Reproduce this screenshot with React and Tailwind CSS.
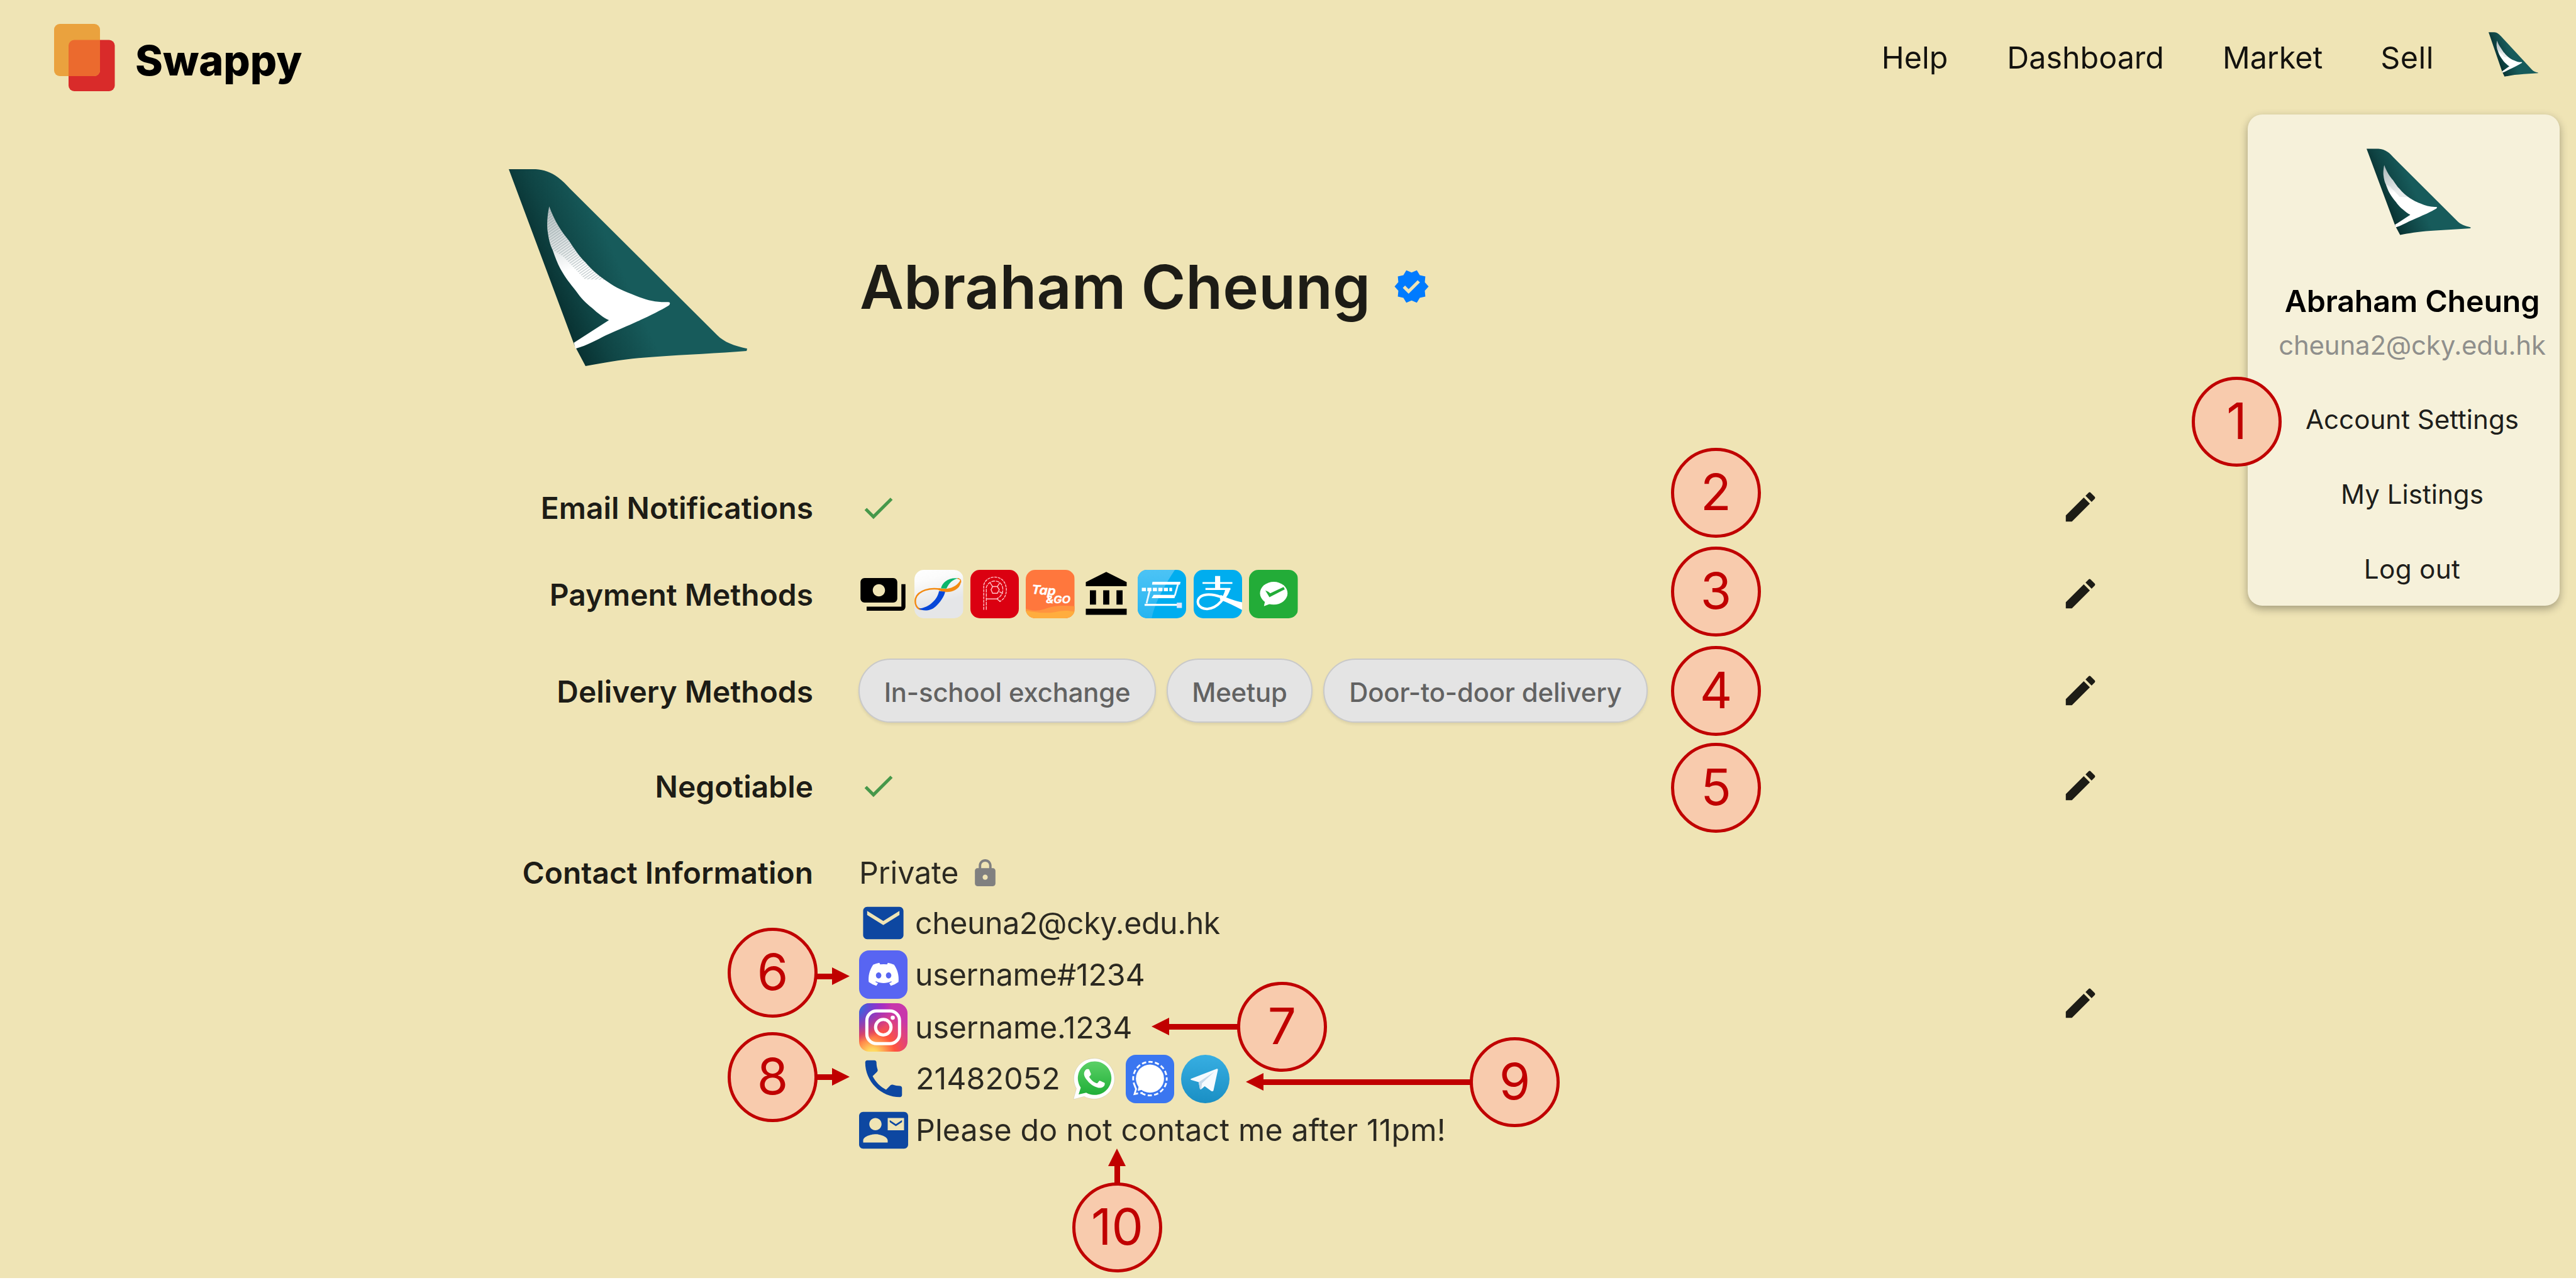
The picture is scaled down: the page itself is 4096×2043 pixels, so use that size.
import React from "react";
import { MdVerified, MdEdit, MdCheck, MdLock, MdEmail, MdPhone, MdContactMail } from "react-icons/md";
import { FaDiscord } from "react-icons/fa";

function TailFin({ id, className }) {
  return (
    <svg viewBox="0 0 408 340" preserveAspectRatio="none" className={className}>
      <defs>
        <linearGradient id={`${id}-body`} gradientUnits="userSpaceOnUse" x1="72" y1="260" x2="205" y2="200">
          <stop offset="0" stopColor="#062a2a" />
          <stop offset="0.45" stopColor="#0f4444" />
          <stop offset="1" stopColor="#175b5b" />
        </linearGradient>
        <linearGradient id={`${id}-feather`} gradientUnits="userSpaceOnUse" x1="70" y1="65" x2="120" y2="200">
          <stop offset="0" stopColor="#b4c0c1" />
          <stop offset="0.45" stopColor="#dde2e3" />
          <stop offset="0.8" stopColor="#ffffff" />
        </linearGradient>
        <pattern id={`${id}-hatch`} width="6" height="4" patternUnits="userSpaceOnUse" patternTransform="rotate(-35)">
          <rect width="6" height="1.4" fill="#7f9295" />
        </pattern>
      </defs>
      <path
        d="M0 1 L46 1 C60 2 72 6 84 15 C92 21 98 27 104 34 L356 286 C368 298 384 304 407 309 L406 313 C360 317 300 319 250 323 C200 326 165 333 131 339 L112 303 Z"
        fill={`url(#${id}-body)`}
      />
      <path
        d="M69 65 C66 80 65 92 66 105 C68 120 70 130 75 140 C79 152 83 162 88 172 C97 188 105 198 114 209 C123 222 132 231 142 239 C152 248 160 255 171 260 L111 299 L114 309 C135 303 150 294 166 286 C186 277 203 270 220 262 C240 253 260 243 273 235 C276 232 276 229 272 229 C250 230 232 225 209 215 C190 208 178 201 164 191 C150 181 140 172 131 161 C120 150 112 138 103 124 C90 108 79 92 69 65 Z"
        fill={`url(#${id}-feather)`}
      />
      <path
        d="M69 65 C66 80 65 92 66 105 C68 120 70 130 75 140 L92 150 L130 190 L164 191 C150 181 140 172 131 161 C120 150 112 138 103 124 C90 108 79 92 69 65 Z"
        fill={`url(#${id}-hatch)`}
        opacity="0.5"
      />
    </svg>
  );
}

function CashIcon() {
  return (
    <svg viewBox="0 0 24 24" className="size-[78px]" fill="#000">
      <path d="M19 14V6c0-1.1-.9-2-2-2H3c-1.1 0-2 .9-2 2v8c0 1.1.9 2 2 2h14c1.1 0 2-.9 2-2zm-9-1c-1.66 0-3-1.34-3-3s1.34-3 3-3 3 1.34 3 3-1.34 3-3 3zm13-6v11c0 1.1-.9 2-2 2H4v-2h17V7h2z" />
    </svg>
  );
}

function BankIcon() {
  return (
    <svg viewBox="0 0 24 24" className="size-[78px]" fill="#000">
      <path d="M4 10h3v7H4zM10.5 10h3v7h-3zM2 19h20v3H2zM17 10h3v7h-3zM12 1 2 6v2h20V6z" />
    </svg>
  );
}

function OctopusIcon() {
  return (
    <svg viewBox="27 39 248 248" className="size-[77.5px] rounded-[15px]">
      <defs>
        <linearGradient id="oct-bg" x1="0" y1="0" x2="0.25" y2="1">
          <stop offset="0" stopColor="#ffffff" />
          <stop offset="0.25" stopColor="#fbfbfb" />
          <stop offset="0.75" stopColor="#e5e6e8" />
        </linearGradient>
      </defs>
      <rect x="27" y="39" width="248" height="248" fill="url(#oct-bg)" />
      <path d="M160 138 C110 128 45 142 33 185 C27 212 38 238 62 240" fill="none" stroke="#f38b12" strokeWidth="8" />
      <path d="M246 83 C262 84 264 94 262 104" fill="none" stroke="#f38b12" strokeWidth="5" />
      <path d="M150 132 C200 142 238 128 261 92 C270 118 240 151 192 152 C172 152 160 147 150 141 Z" fill="#f38b12" />
      <path d="M162 133 C170 100 202 76 250 82 C222 88 204 104 190 134 Z" fill="#0bb56c" />
      <path d="M152 147 C145 190 100 233 48 236 C70 250 108 250 135 225 C160 202 180 172 183 150 Z" fill="#0747d8" />
    </svg>
  );
}

function PayMeIcon() {
  return (
    <svg viewBox="305 39 248 248" className="size-[77.5px] rounded-[15px]">
      <rect x="305" y="39" width="248" height="248" fill="#db0011" />
      <g fill="none" stroke="#ffc4c8" strokeWidth="4.5">
        <path d="M373 242 V116 C380 88 405 76 430 76 C462 76 486 100 488 138 C488 170 475 192 452 200" strokeDasharray="14 4" />
        <path d="M386 242 V128 C392 108 410 96 430 96 C454 96 470 114 470 140 C470 162 458 176 440 186" strokeDasharray="18 4" />
        <path d="M418 124 H442 L452 140 L442 158 H418 L410 140 Z" />
        <path d="M405 104 L418 124 M455 104 L442 124 M470 160 L452 150" />
        <path d="M388 187 H440 L458 201" />
      </g>
    </svg>
  );
}

function TapGoIcon() {
  return (
    <svg viewBox="593 39 248 248" className="size-[77.5px] rounded-[15px]">
      <rect x="593" y="39" width="248" height="248" fill="#ff773d" />
      <path d="M593 236 C620 248 650 250 690 238 C730 224 760 218 841 224 V287 H593 Z" fill="#ff943f" />
      <path d="M593 246 C640 256 700 262 740 254 C780 246 800 244 841 252 V287 H593 Z" fill="#ffad3e" />
      <g fill="#fff" stroke="#fff" strokeWidth="2" fontFamily="Inter, sans-serif" fontWeight="600" fontStyle="italic">
        <text x="622" y="160" fontSize="62" textLength="122" lengthAdjust="spacingAndGlyphs" transform="rotate(4 622 160)">Tap</text>
        <text x="696" y="207" fontSize="50" textLength="124" lengthAdjust="spacingAndGlyphs">&amp;GO</text>
      </g>
    </svg>
  );
}

function FpsIcon() {
  return (
    <svg viewBox="47 39 248 248" className="size-[77.5px] rounded-[15px]">
      <defs>
        <linearGradient id="fps-shine" x1="0" y1="0" x2="0" y2="1">
          <stop offset="0" stopColor="#4cc3f5" />
          <stop offset="1" stopColor="#26b5f1" />
        </linearGradient>
      </defs>
      <rect x="47" y="39" width="248" height="248" fill="#00adef" />
      <path d="M47 39 H236 C190 110 135 200 118 287 H47 Z" fill="url(#fps-shine)" />
      <path d="M122 100 H265 L262 114 H120 Z" fill="#fff" />
      <path d="M128 166 H240 L234 183 H118 Z" fill="#fff" />
      <path d="M252 112 L236 170 M108 144 L92 210" stroke="#e8f6ff" strokeWidth="9" />
      <path d="M68 139 H222" stroke="#fff" strokeWidth="17" strokeDasharray="21 7" />
      <path d="M82 217 H262" stroke="#fff" strokeWidth="11" />
      <rect x="246" y="206" width="26" height="27" fill="#dfe6fb" />
    </svg>
  );
}

function AlipayIcon() {
  return (
    <svg viewBox="325 39 248 248" className="size-[77.5px] rounded-[15px]">
      <rect x="325" y="39" width="248" height="248" fill="#00adef" />
      <path d="M434 70 H460 V134 H434 Z M370 101 H522 V110 H370 Z M385 131 H512 V141 H385 Z" fill="#fff" />
      <path d="M500 136 C486 178 450 236 393 238 C345 236 332 196 362 174 C392 156 440 166 480 184" fill="none" stroke="#fff" strokeWidth="13" />
      <path d="M486 134 H512 C505 156 497 170 488 182 L470 178 C478 164 484 150 486 134 Z" fill="#fff" />
      <path d="M462 166 C500 184 540 198 573 204 V244 C535 224 500 206 458 190 Z" fill="#fff" />
    </svg>
  );
}

function WeChatPayIcon() {
  return (
    <svg viewBox="614 39 248 248" className="size-[77.5px] rounded-[15px]">
      <rect x="614" y="39" width="248" height="248" fill="#23ac38" />
      <ellipse cx="740" cy="158" rx="70" ry="58" fill="#fff" />
      <path d="M696 196 L690 224 L726 210 Z" fill="#fff" />
      <path d="M697 144 L712 150 L722 158 L790 126 L796 138 L718 178 Z" fill="#23ac38" />
    </svg>
  );
}

function DiscordIcon() {
  return (
    <div className="flex size-[77px] items-center justify-center rounded-[16px] bg-[#5865f2]">
      <FaDiscord className="size-[52px] text-white" />
    </div>
  );
}

function InstagramIcon() {
  return (
    <svg viewBox="0 0 100 100" className="size-[77px] rounded-[16px]">
      <defs>
        <radialGradient id="ig-warm" cx="0.27" cy="1.07" r="0.99">
          <stop offset="0" stopColor="#ffdd6e" />
          <stop offset="0.12" stopColor="#ffd75e" />
          <stop offset="0.48" stopColor="#ff543e" />
          <stop offset="0.98" stopColor="#c837ab" />
        </radialGradient>
        <radialGradient id="ig-cool" gradientUnits="userSpaceOnUse" cx="-10" cy="4" r="78">
          <stop offset="0" stopColor="#3771c8" />
          <stop offset="0.2" stopColor="#3c68d8" />
          <stop offset="1" stopColor="#6600ff" stopOpacity="0" />
        </radialGradient>
      </defs>
      <rect width="100" height="100" fill="url(#ig-warm)" />
      <rect width="100" height="100" fill="url(#ig-cool)" />
      <rect x="16" y="16" width="67.5" height="67.5" rx="20" fill="none" stroke="#fff" strokeWidth="6.5" />
      <circle cx="50" cy="49.5" r="16" fill="none" stroke="#fff" strokeWidth="6.5" />
      <circle cx="69.5" cy="30" r="4.3" fill="#fff" />
    </svg>
  );
}

function WhatsAppIcon() {
  return (
    <svg viewBox="29 35 248 248" className="size-[77px]">
      <defs>
        <linearGradient id="wa-green" x1="0" y1="0" x2="0" y2="1">
          <stop offset="0" stopColor="#5bd066" />
          <stop offset="1" stopColor="#1faf38" />
        </linearGradient>
      </defs>
      <path d="M45 263 L60 208 A104 104 0 1 1 100 248 Z" fill="#fff" stroke="#00000018" strokeWidth="3" />
      <path d="M71 238 L82 203 A86 86 0 1 1 110 229 Z" fill="url(#wa-green)" />
      <path
        transform="translate(46 53) scale(8.8 8.6)"
        fill="#fff"
        d="M17.472 14.382c-.297-.149-1.758-.867-2.03-.967-.273-.099-.471-.148-.67.15-.197.297-.767.966-.94 1.164-.173.199-.347.223-.644.075-.297-.15-1.255-.463-2.39-1.475-.883-.788-1.48-1.761-1.653-2.059-.173-.297-.018-.458.13-.606.134-.133.298-.347.446-.52.149-.174.198-.298.298-.497.099-.198.05-.371-.025-.52-.075-.149-.669-1.612-.916-2.207-.242-.579-.487-.5-.669-.51-.173-.008-.371-.01-.57-.01-.198 0-.52.074-.792.372-.272.297-1.04 1.016-1.04 2.479 0 1.462 1.065 2.875 1.213 3.074.149.198 2.096 3.2 5.077 4.487.709.306 1.262.489 1.694.625.712.227 1.36.195 1.871.118.571-.085 1.758-.719 2.006-1.413.248-.694.248-1.289.173-1.413-.074-.124-.272-.198-.57-.347z"
      />
    </svg>
  );
}

function SignalIcon() {
  return (
    <svg viewBox="315 35 248 248" className="size-[77px] rounded-[16px]">
      <rect x="315" y="35" width="248" height="248" fill="#3a76f0" />
      <circle cx="439" cy="157" r="86" fill="none" stroke="#fff" strokeWidth="9" strokeDasharray="22 11.8" strokeDashoffset="11" />
      <path d="M346 250 V208 L374 196 L402 222 L390 250 Z" fill="#3a76f0" />
      <circle cx="439" cy="157" r="72" fill="#fff" />
      <path d="M376 220 L384 184 L414 210 Z" fill="#fff" />
      <path d="M362 196 L368 210 L360 236 L378 233 M390 232 L402 229" fill="none" stroke="#fff" strokeWidth="9" />
    </svg>
  );
}

function TelegramIcon() {
  return (
    <svg viewBox="593 34 248 248" className="size-[77px]">
      <defs>
        <linearGradient id="tg-blue" x1="0" y1="0" x2="0" y2="1">
          <stop offset="0" stopColor="#37aee2" />
          <stop offset="1" stopColor="#1a8fc4" />
        </linearGradient>
      </defs>
      <circle cx="717" cy="158" r="124" fill="url(#tg-blue)" />
      <path d="M644 156 L776 106 C781 104 782 108 781 114 L759 216 C757 222 752 222 747 219 L714 195 L696 210 C692 213 690 211 689 206 L683 174 L645 163 C641 161 641 158 644 156 Z" fill="#f6fafe" />
      <path d="M683 174 L762 122 L700 180 L696 210 C692 213 690 211 689 206 Z" fill="#c5d9ea" />
    </svg>
  );
}

function Row({ label, height, children }) {
  return (
    <div className={`grid grid-cols-[484px_1fr_62px] items-center ${height}`}>
      <div className="pt-[2px] text-right text-[47.9px] leading-[60px] font-semibold">{label}</div>
      <div className="flex items-center pl-[72px]">{children}</div>
      <MdEdit className="mb-[2px] size-[62px]" />
    </div>
  );
}

function Chip({ width, children }) {
  return (
    <div
      className={`flex h-[102px] items-center justify-center rounded-full border-2 border-[#c9c9c9] bg-[#e4e4e4] pt-[7px] text-[41.8px] font-medium tracking-[-0.15px] text-[#626262] shadow-[0_3px_4px_rgba(0,0,0,0.08)] ${width}`}
    >
      {children}
    </div>
  );
}

const badges = [
  ["1", "left-[3485px] top-[599px]"],
  ["2", "left-[2657px] top-[712px]"],
  ["3", "left-[2657px] top-[869px]"],
  ["4", "left-[2657px] top-[1027px]"],
  ["5", "left-[2657px] top-[1181px]"],
  ["6", "left-[1157px] top-[1475px]"],
  ["7", "left-[1967px] top-[1561px]"],
  ["8", "left-[1157px] top-[1641px]"],
  ["9", "left-[2337px] top-[1649px]"],
  ["10", "left-[1705px] top-[1880px]"],
];

function Arrow({ className, flip }) {
  return (
    <div className={`absolute flex items-center ${flip ? "flex-row-reverse" : ""} ${className}`}>
      <div className="h-[9px] grow bg-[#c00000]" />
      <svg viewBox="0 0 28 28" className={`size-[28px] shrink-0 ${flip ? "rotate-180" : ""}`}>
        <path d="M0 0 L28 14 L0 28 Z" fill="#c00000" />
      </svg>
    </div>
  );
}

function Annotations() {
  return (
    <>
      <Arrow className="left-[1298px] top-[1538px] w-[53px]" />
      <Arrow className="left-[1298px] top-[1698px] w-[53px]" />
      <Arrow flip className="left-[1831px] top-[1618px] w-[140px]" />
      <Arrow flip className="left-[1981px] top-[1706px] w-[360px]" />
      <div className="absolute left-[1762px] top-[1826px] flex h-[57px] w-[28px] flex-col items-center">
        <svg viewBox="0 0 28 28" className="size-[28px] shrink-0">
          <path d="M14 0 L28 28 L0 28 Z" fill="#c00000" />
        </svg>
        <div className="w-[9px] grow bg-[#c00000]" />
      </div>
      {badges.map(([n, place]) => (
        <div
          key={n}
          className={`absolute flex size-[143px] items-center justify-center rounded-full border-[5px] border-[#c00000] bg-[#f8cbad] pb-[4px] text-[80px] leading-none text-[#c00000] ${place}`}
        >
          {n}
        </div>
      ))}
    </>
  );
}

function AccountMenu() {
  return (
    <div className="absolute left-[3574px] top-[182px] flex h-[781px] w-[496px] flex-col items-center rounded-[23px] bg-[#f6f1da] pl-[27px] pt-[54px] whitespace-nowrap text-black/90 shadow-[0_5px_14px_rgba(0,0,0,0.32)]">
      <TailFin id="menu" className="ml-[21px] h-[138px] w-[166px] shrink-0" />
      <div className="mt-[70px] text-[48.3px] leading-[70px] font-semibold tracking-[-0.15px] text-black">Abraham Cheung</div>
      <div className="text-[41.9px] leading-[70px] tracking-[-0.17px] text-[#8f8f8c]">cheuna2@cky.edu.hk</div>
      <div className="mt-[23px] text-[42.1px] leading-[119px]">Account Settings</div>
      <div className="text-[42.1px] leading-[119px]">My Listings</div>
      <div className="text-[42.3px] leading-[119px] tracking-[0.3px]">Log out</div>
    </div>
  );
}

export default function App() {
  return (
    <div className="h-[2043px] w-[4096px] overflow-hidden bg-white font-['Inter',sans-serif] text-black/88">
      <div className="relative h-[2032px] w-full bg-[#efe4b5]">
        <header className="flex h-[182px] items-center pl-[86px]">
          <svg viewBox="0 0 97 107" className="h-[107px] w-[97px]">
            <rect x="23" y="25.5" width="73.5" height="81.5" rx="9" fill="#d92b2a" />
            <rect x="0" y="0" width="73" height="83" rx="9" fill="#eaa23e" />
            <path d="M32 25.5 H73 V74 A9 9 0 0 1 64 83 H23 V34.5 A9 9 0 0 1 32 25.5 Z" fill="#eb6a2e" />
          </svg>
          <div className="ml-[32px] pt-[9px] text-[66.6px] leading-[80px] font-extrabold text-black">Swappy</div>
          <nav className="ml-auto flex items-center pt-[1px] text-[48.4px] leading-[60px] text-black/92">
            <span className="mr-[94px]">Help</span>
            <span className="mr-[93px]">Dashboard</span>
            <span className="mr-[92px]">Market</span>
            <span className="mr-[87px] tracking-[0.5px]">Sell</span>
            <TailFin id="nav" className="mr-[60px] mb-[11px] h-[71px] w-[79px]" />
          </nav>
        </header>

        <main className="ml-[809px] w-[2530px]">
          <section className="flex h-[556px] items-start pt-[86px]">
            <div className="w-[558px]">
              <TailFin id="profile" className="h-[315px] w-[380px]" />
            </div>
            <div className="flex h-[375px] items-center gap-[36px]">
              <h1 className="text-[96.2px] leading-[120px] font-semibold">Abraham Cheung</h1>
              <MdVerified className="size-[59px] text-[#007bff]" />
            </div>
          </section>

          <Row label="Email Notifications" height="h-[138px]">
            <MdCheck className="ml-[1px] size-[61px] text-[#46984a]" />
          </Row>
          <Row label="Payment Methods" height="h-[137px]">
            <div className="flex items-center gap-[11.1px]">
              <CashIcon />
              <OctopusIcon />
              <PayMeIcon />
              <TapGoIcon />
              <BankIcon />
              <FpsIcon />
              <AlipayIcon />
              <WeChatPayIcon />
            </div>
          </Row>
          <Row label="Delivery Methods" height="h-[171px]">
            <div className="-mt-[2px] flex gap-[17px]">
              <Chip width="w-[473px]">In-school exchange</Chip>
              <Chip width="w-[232px]">Meetup</Chip>
              <Chip width="w-[516px]">Door-to-door delivery</Chip>
            </div>
          </Row>
          <Row label="Negotiable" height="h-[131px]">
            <MdCheck className="ml-[1px] size-[61px] text-[#46984a]" />
          </Row>

          <div className="mt-[32px] grid grid-cols-[484px_1fr_62px] text-[48.3px]">
            <div className="pt-px text-right text-[47.9px] leading-[80px] font-semibold">Contact Information</div>
            <div className="pl-[73px] whitespace-nowrap text-black/82">
              <div className="flex h-[80px] items-center gap-[18px] pt-[2px]">
                <span className="tracking-[-0.1px]">Private</span>
                <MdLock className="size-[49px] text-[#808080]" />
              </div>
              <div className="flex h-[80px] items-center gap-[12px]">
                <MdEmail className="size-[77px] text-[#0d47a1]" />
                <span className="pt-[2px] tracking-[-0.45px]">cheuna2@cky.edu.hk</span>
              </div>
              <div className="flex h-[84px] items-center gap-[12px]">
                <DiscordIcon />
                <span className="pt-[3px] tracking-[-0.2px]">username#1234</span>
              </div>
              <div className="flex h-[84px] items-center gap-[12px]">
                <InstagramIcon />
                <span className="pt-[3px] tracking-[-0.15px]">username.1234</span>
              </div>
              <div className="flex h-[80px] items-center gap-[12px]">
                <MdPhone className="size-[78px] text-[#0d47a1]" />
                <span className="tracking-[0.1px]">21482052</span>
                <div className="ml-[4px] flex items-center gap-[11px]">
                  <WhatsAppIcon />
                  <SignalIcon />
                  <TelegramIcon />
                </div>
              </div>
              <div className="flex h-[84px] items-center gap-[12px]">
                <MdContactMail className="size-[78px] text-[#0d47a1]" />
                <span className="pt-px tracking-[0.15px]">Please do not contact me after 11pm!</span>
              </div>
            </div>
            <div className="flex items-center pt-[4px]">
              <MdEdit className="size-[62px]" />
            </div>
          </div>
        </main>

        <AccountMenu />
        <Annotations />
      </div>
    </div>
  );
}
